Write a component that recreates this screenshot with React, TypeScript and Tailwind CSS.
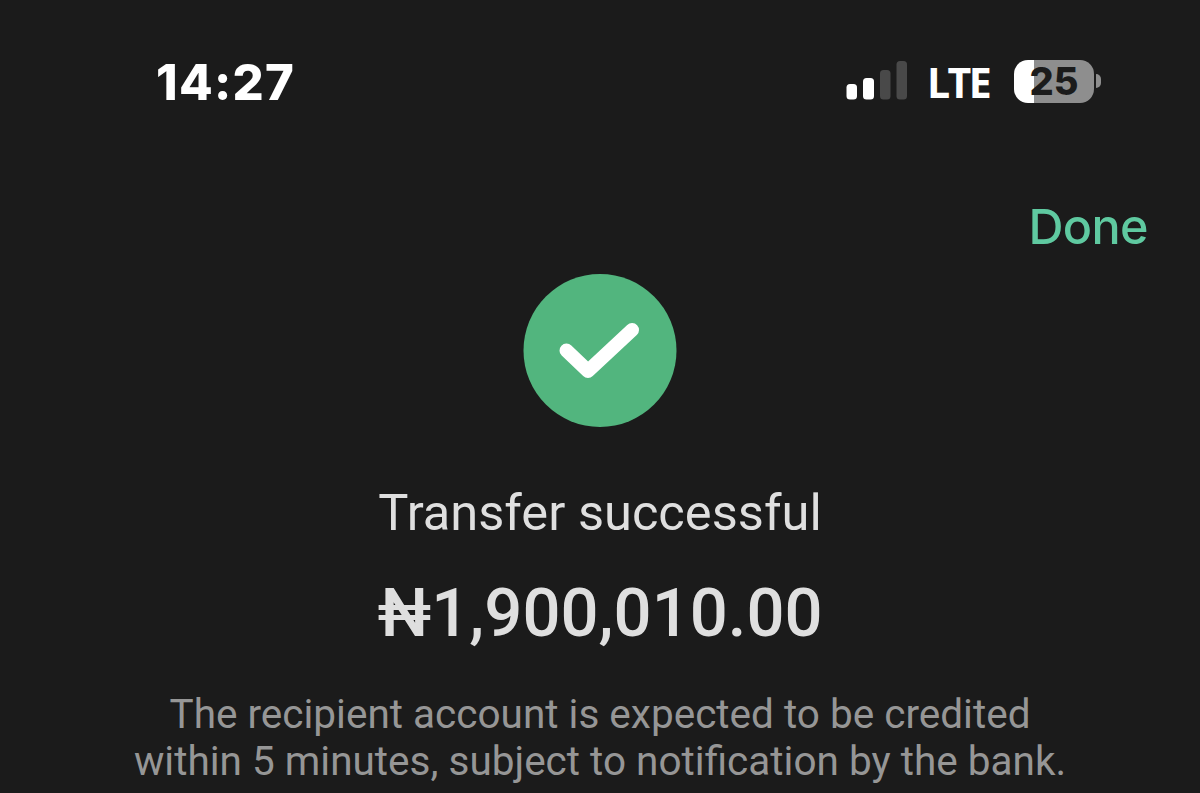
export default function App() {
  return (
    <main className="flex h-[793px] w-[1200px] flex-col items-center overflow-hidden bg-[#1b1b1b] font-['Roboto',sans-serif]">
      <header className="flex h-[164px] w-full items-start justify-between pt-[51px] pr-[99px] pl-[156px]">
        <time className="font-['Inter',sans-serif] text-[49px] leading-[63px] font-extrabold tracking-[1.3px] text-white">14:27</time>
        <div className="flex h-[60px] items-center">
          <svg className="h-[42px] w-[62px]" viewBox="0 0 62 42" aria-hidden="true">
            <rect x="0.5" y="24" width="10.5" height="15.5" rx="3.5" fill="#fff" />
            <rect x="17" y="18" width="11" height="21.5" rx="3.5" fill="#fff" />
            <rect x="34" y="10" width="10.5" height="29.5" rx="3.5" fill="#494949" />
            <rect x="50.5" y="1" width="10.5" height="38.5" rx="3.5" fill="#494949" />
          </svg>
          <span className="ml-[19px] w-[65px] pt-px font-['Open_Sans',sans-serif] text-[41px] leading-[60px] font-bold tracking-[-2.6px] text-white">LTE</span>
          <div className="ml-[22px] flex items-center">
            <div className="flex h-[43px] w-[80px] items-center justify-center rounded-[14px] bg-[linear-gradient(90deg,#fff_25%,#8e8e8e_25%)]">
              <span className="font-['Inter',sans-serif] text-[38px] font-extrabold text-[#1b1b1b]">25</span>
            </div>
            <div className="ml-[2px] h-[14px] w-[5px] rounded-r-full bg-[#8e8e8e]" />
          </div>
        </div>
      </header>
      <nav className="flex h-[109px] w-full justify-end pt-[33px] pr-[52px]">
        <button className="h-[60px] font-['Inter',sans-serif] text-[48.5px] leading-[60px] font-[550] tracking-[-0.6px] text-[#5fc9a0]">Done</button>
      </nav>
      <svg className="h-[154px] w-[154px] shrink-0" viewBox="0 0 154 154" fill="none" aria-hidden="true">
        <circle cx="77" cy="77.5" r="76.5" fill="#52b57e" />
        <path d="M43.5 77.5L65 98L109 57" stroke="#fff" strokeWidth="14" strokeLinecap="round" strokeLinejoin="round" />
      </svg>
      <h1 className="mt-[56px] text-[50.6px] leading-[60px] font-normal whitespace-nowrap text-[#dfdfdf]">Transfer successful</h1>
      <p className="mt-[28px] text-[67px] leading-[84px] font-medium whitespace-nowrap text-[#dfdfdf]">₦1,900,010.00</p>
      <p className="mt-[36px] text-center text-[40.5px] leading-[47px] whitespace-nowrap text-[#969696]">
        The recipient account is expected to be credited<br />within 5 minutes, subject to notification by the bank.
      </p>
    </main>
  );
}
